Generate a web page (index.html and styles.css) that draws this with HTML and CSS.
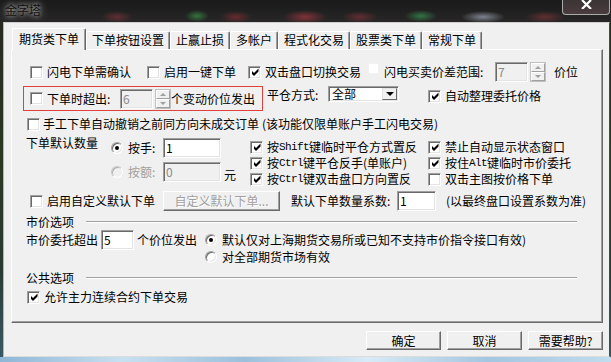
FILE: index.html
```html
<!DOCTYPE html>
<html lang="zh-CN">
<head>
    <meta charset="UTF-8">
    <title>金字塔</title>
    <link rel="stylesheet" href="styles.css">
</head>
<body>
<div class="desktop">
    <div class="titlebar">
        <span class="title">金字塔</span>
        <span class="close-btn">
            <svg width="11" height="9" viewBox="0 0 11 9"><path d="M1 0 L10 9 M10 0 L1 9" stroke="#fff" stroke-width="2.2"/></svg>
        </span>
    </div>

    <div class="window">
        <div class="tabs">
            <span class="tab active">期货类下单</span>
            <span class="tab">下单按钮设置</span>
            <span class="tab">止赢止损</span>
            <span class="tab">多帐户</span>
            <span class="tab">程式化交易</span>
            <span class="tab">股票类下单</span>
            <span class="tab">常规下单</span>
        </div>

        <div class="panel">
            <!-- first line of switches -->
            <div class="row row1">
                <span class="check w117"><i class="cb"></i>闪电下单需确认</span>
                <span class="check w101"><i class="cb"></i>启用一键下单</span>
                <span class="check w120"><i class="cb"><svg width="9" height="9" viewBox="0 0 9 9"><polygon points="1,3 3,5 7.5,0.5 7.5,3.5 3,8 1,6"/></svg></i>双击盘口切换交易</span>
                <span class="check w127 gap3"><i class="cb faint"></i>闪电买卖价差范围:</span>
                <span class="field disabled w33">7</span>
                <span class="spin"><span class="spin-btn"><i class="arr-up"></i></span><span class="spin-btn"><i class="arr-down"></i></span></span>
                <span class="unit">价位</span>
            </div>

            <div class="row row2">
                <div class="redbox">
                    <span class="check w90"><i class="cb"></i>下单时超出:</span>
                    <span class="field disabled w33">6</span>
                    <span class="spin"><span class="spin-btn"><i class="arr-up"></i></span><span class="spin-btn"><i class="arr-down"></i></span></span>
                    <span>个变动价位发出</span>
                </div>
                <span class="pc-label">平仓方式:</span>
                <span class="select">
                    <span class="select-text">全部</span>
                    <span class="select-btn"><i class="arr-black"></i></span>
                </span>
                <span class="check auto-price"><i class="cb"><svg width="9" height="9" viewBox="0 0 9 9"><polygon points="1,3 3,5 7.5,0.5 7.5,3.5 3,8 1,6"/></svg></i>自动整理委托价格</span>
            </div>

            <div class="row row3">
                <span class="check gap3"><i class="cb"></i>手工下单自动撤销之前同方向未成交订单</span>
                <span class="note">(该功能仅限单账户手工闪电交易)</span>
            </div>

            <div class="row row4">
                <span class="qty-label">下单默认数量</span>
                <div class="qty-opts">
                    <div class="qty-line">
                        <span class="radio w52"><i class="rd on"><b></b></i>按手:</span>
                        <span class="field w58">1</span>
                    </div>
                    <div class="qty-line">
                        <span class="radio w52 off"><i class="rd"></i>按额:</span>
                        <span class="field disabled w58">0</span>
                        <span class="unit-yuan">元</span>
                    </div>
                </div>
                <div class="opts-grid">
                    <span class="check"><i class="cb"><svg width="9" height="9" viewBox="0 0 9 9"><polygon points="1,3 3,5 7.5,0.5 7.5,3.5 3,8 1,6"/></svg></i><span>按<span class="mono m5">Shift</span>键临时平仓方式置反</span></span>
                    <span class="check"><i class="cb"><svg width="9" height="9" viewBox="0 0 9 9"><polygon points="1,3 3,5 7.5,0.5 7.5,3.5 3,8 1,6"/></svg></i>禁止自动显示状态窗口</span>
                    <span class="check"><i class="cb"><svg width="9" height="9" viewBox="0 0 9 9"><polygon points="1,3 3,5 7.5,0.5 7.5,3.5 3,8 1,6"/></svg></i><span>按<span class="mono m4">Ctrl</span>键平仓反手(单账户)</span></span>
                    <span class="check"><i class="cb"><svg width="9" height="9" viewBox="0 0 9 9"><polygon points="1,3 3,5 7.5,0.5 7.5,3.5 3,8 1,6"/></svg></i><span>按住<span class="mono m3">Alt</span>键临时市价委托</span></span>
                    <span class="check"><i class="cb"><svg width="9" height="9" viewBox="0 0 9 9"><polygon points="1,3 3,5 7.5,0.5 7.5,3.5 3,8 1,6"/></svg></i><span>按<span class="mono m4">Ctrl</span>键双击盘口方向置反</span></span>
                    <span class="check"><i class="cb"></i>双击主图按价格下单</span>
                </div>
            </div>

            <div class="row row5">
                <span class="check w133"><i class="cb"></i>启用自定义默认下单</span>
                <span class="btn-off">自定义默认下单...</span>
                <span class="factor-label">默认下单数量系数:</span>
                <span class="field w39">1</span>
                <span class="factor-note">(以最终盘口设置系数为准)</span>
            </div>

            <div class="group">
                <span class="group-title">市价选项</span>
                <span class="group-line"></span>
            </div>

            <div class="row row-market">
                <span class="w75">市价委托超出</span>
                <span class="field w33">5</span>
                <span class="market-unit">个价位发出</span>
                <span class="radio"><i class="rd on"><b></b></i>默认仅对上海期货交易所或已知不支持市价指令接口有效)</span>
            </div>
            <div class="row row-radio2">
                <span class="radio"><i class="rd"></i>对全部期货市场有效</span>
            </div>

            <div class="group common">
                <span class="group-title">公共选项</span>
                <span class="group-line"></span>
            </div>

            <div class="row row-last">
                <span class="check"><i class="cb"><svg width="9" height="9" viewBox="0 0 9 9"><polygon points="1,3 3,5 7.5,0.5 7.5,3.5 3,8 1,6"/></svg></i>允许主力连续合约下单交易</span>
            </div>
        </div>

        <div class="footer">
            <span class="btn">确定</span>
            <span class="btn">取消</span>
            <span class="btn">需要帮助?</span>
        </div>
    </div>

    <div class="dock"></div>
</div>
</body>
</html>
```

FILE: styles.css
```css
* {
    box-sizing: border-box;
    margin: 0;
    padding: 0;
}

body {
    width: 611px;
    height: 362px;
    overflow: hidden;
    background: #1d211d;
    font-family: "Noto Sans CJK SC", "Liberation Sans", sans-serif;
    font-size: 12px;
    line-height: 14px;
    color: #000;
    text-autospace: no-autospace;
}

i {
    font-style: normal;
}

.desktop {
    width: 611px;
    height: 362px;
    background: linear-gradient(to bottom, #26271f 0%, #2c3824 45%, #2a3a33 75%, #3a5a68 100%);
}

/* aero title bar */
.titlebar {
    height: 22px;
    display: flex;
    justify-content: space-between;
    align-items: flex-start;
    background:
        radial-gradient(ellipse 16px 6px at 117px 17px, rgba(170, 60, 70, 0.45), transparent),
        radial-gradient(ellipse 12px 6px at 197px 16px, rgba(60, 170, 80, 0.6), transparent),
        radial-gradient(ellipse 16px 6px at 236px 17px, rgba(170, 50, 60, 0.5), transparent),
        radial-gradient(ellipse 22px 7px at 305px 17px, rgba(190, 60, 70, 0.6), transparent),
        radial-gradient(ellipse 18px 6px at 360px 17px, rgba(170, 60, 70, 0.45), transparent),
        radial-gradient(ellipse 16px 6px at 421px 16px, rgba(60, 170, 90, 0.6), transparent),
        radial-gradient(ellipse 22px 6px at 483px 17px, rgba(200, 210, 230, 0.55), transparent),
        radial-gradient(ellipse 20px 6px at 545px 17px, rgba(170, 60, 70, 0.45), transparent),
        linear-gradient(to bottom, #1a1a1a, #282626);
}

.title {
    margin: 3px 0 0 5px;
    color: #111;
    text-shadow: 0 0 4px #bbb, 0 0 8px rgba(255, 255, 255, 0.6);
}

.close-btn {
    width: 48px;
    height: 15px;
    margin-right: 1px;
    border: 1px solid rgba(210, 210, 210, 0.75);
    border-top: 0;
    border-radius: 0 0 4px 4px;
    background: linear-gradient(#3a3434, #4a3c40);
    display: flex;
    justify-content: center;
    align-items: flex-start;
}

/* dialog */
.window {
    width: 607px;
    height: 335px;
    margin-left: 3px;
    background: #f0f0f0;
    border: 1px solid;
    border-color: #cfcfcf #4a4a4a #dcdcdc #b4b4b4;
    padding: 5px 0 0 7px;
}

.tabs {
    display: flex;
    align-items: flex-end;
    height: 21px;
    padding-left: 1px;
}

.tab {
    height: 18px;
    padding: 0 5px;
    border: 1px solid;
    border-bottom: 0;
    border-color: #fff #696969 #fff #fff;
    box-shadow: inset -1px 0 #a0a0a0;
    border-radius: 2px 2px 0 0;
    line-height: 16px;
    white-space: nowrap;
}

.tab.active {
    height: 22px;
    padding: 0 6px;
    margin-bottom: -1px;
    line-height: 20px;
    background: #f0f0f0;
    position: relative;
    z-index: 1;
}

.panel {
    width: 592px;
    height: 274px;
    border: 1px solid;
    border-color: #fff #696969 #696969 #fff;
    box-shadow: inset -1px -1px #a0a0a0;
    padding: 12px 0 0 14px;
}

.row {
    display: flex;
    align-items: center;
    white-space: nowrap;
}

.row1 {
    height: 20px;
    margin-left: 4px;
}

.row2 {
    height: 25px;
    margin-top: 4px;
    align-items: flex-start;
}

.row3 {
    height: 14px;
    margin-top: 6px;
    margin-left: 1px;
}

.row4 {
    margin-top: 5px;
    align-items: flex-start;
}

.row5 {
    height: 20px;
    margin-top: 4px;
    margin-left: 4px;
}

.row-market {
    height: 20px;
    margin-top: 1px;
}

.row-radio2 {
    height: 14px;
    margin-left: 179px;
}

.row-last {
    height: 14px;
    margin-top: 5px;
    margin-left: 1px;
}

/* widths */
.w33 { width: 33px; }
.w39 { width: 39px; }
.w52 { width: 52px; }
.w58 { width: 58px; }
.w75 { width: 75px; }
.w90 { width: 90px; }
.w101 { width: 101px; }
.w117 { width: 117px; }
.w120 { width: 120px; }
.w127 { width: 127px; }
.w133 { width: 133px; }

/* checkbox */
.check {
    display: flex;
    align-items: center;
    gap: 4px;
    flex: none;
    white-space: nowrap;
}

.check.gap3 {
    gap: 3px;
}

.cb {
    width: 13px;
    height: 13px;
    flex: none;
    background: #fff;
    border: 1px solid;
    border-color: #a0a0a0 #fff #fff #a0a0a0;
    box-shadow: inset 1px 1px #696969, inset -1px -1px #e3e3e3;
    display: flex;
    align-items: center;
    justify-content: center;
}

.cb svg {
    margin: 1px 0 0 1px;
}

.cb.faint {
    border-color: #f2f2f2;
    box-shadow: none;
    width: 11px;
    height: 11px;
    margin: 0 2px 7px 0;
}

/* radio */
.radio {
    display: flex;
    align-items: center;
    gap: 5px;
    flex: none;
}

.radio.off {
    color: #a0a0a0;
}

.rd {
    width: 12px;
    height: 12px;
    flex: none;
    border-radius: 50%;
    background: #fff;
    border: 1px solid;
    border-color: #a0a0a0 #fff #fff #a0a0a0;
    box-shadow: inset 1px 1px #696969, inset -1px -1px #e3e3e3;
    display: flex;
    align-items: center;
    justify-content: center;
}

.radio.off .rd {
    background: #f0f0f0;
    border-color: #c8c8c8 #fff #fff #c8c8c8;
    box-shadow: inset 1px 1px #b0b0b0;
}

.rd b {
    width: 4px;
    height: 4px;
    border-radius: 50%;
    background: #000;
}

/* edit box */
.field {
    height: 20px;
    flex: none;
    background: #fff;
    border: 1px solid;
    border-color: #a0a0a0 #fff #fff #a0a0a0;
    box-shadow: inset 1px 1px #696969, inset -1px -1px #e3e3e3;
    padding: 0 2px;
    line-height: 18px;
}

.field.disabled {
    background: #f0f0f0;
    color: #8a8a8a;
}

.spin {
    width: 16px;
    height: 20px;
    margin-left: 2px;
    flex: none;
    display: flex;
    flex-direction: column;
    border: 1px solid #c0c0c0;
}

.spin-btn {
    flex: 1;
    background: #f0f0f0;
    border: 1px solid;
    border-color: #fff #a0a0a0 #a0a0a0 #fff;
    display: flex;
    align-items: center;
    justify-content: center;
}

.arr-up {
    border-left: 3px solid transparent;
    border-right: 3px solid transparent;
    border-bottom: 3px solid #a0a0a0;
}

.arr-down {
    border-left: 3px solid transparent;
    border-right: 3px solid transparent;
    border-top: 3px solid #a0a0a0;
}

.unit {
    margin-left: 8px;
}

.redbox {
    width: 240px;
    height: 25px;
    margin-left: -3px;
    border: 1px solid #e2403f;
    display: flex;
    align-items: center;
    padding-left: 6px;
}

.pc-label {
    width: 61px;
    margin: 2px 0 0 4px;
}

.select {
    width: 71px;
    height: 16px;
    display: flex;
    background: #fff;
    border: 1px solid;
    border-color: #a0a0a0 #fff #fff #a0a0a0;
    box-shadow: inset 1px 1px #696969, inset -1px -1px #e3e3e3;
    padding: 1px;
}

.select-text {
    flex: 1;
    padding-left: 2px;
    line-height: 12px;
}

.select-btn {
    width: 15px;
    background: #f0f0f0;
    border: 1px solid;
    border-color: #e3e3e3 #696969 #696969 #e3e3e3;
    display: flex;
    align-items: center;
    justify-content: center;
}

.arr-black {
    border-left: 4px solid transparent;
    border-right: 4px solid transparent;
    border-top: 4px solid #000;
}

.auto-price {
    margin: 3px 0 0 29px;
}

.note {
    margin-left: 3px;
}

.qty-label {
    width: 85px;
}

.qty-opts {
    width: 139px;
    margin-top: 2px;
    display: flex;
    flex-direction: column;
    gap: 4px;
}

.qty-line {
    display: flex;
    align-items: center;
    height: 20px;
}

.unit-yuan {
    margin: 6px 0 0 3px;
}

.opts-grid {
    margin-top: 3px;
    display: grid;
    grid-template-columns: 178px auto;
    grid-auto-rows: 16px;
    align-items: center;
}

/* latin words drawn half-width, as in the old bitmap font */
.mono {
    display: inline-block;
    font-family: "Liberation Mono", monospace;
    font-size: 11px;
    letter-spacing: -0.6px;
    overflow: visible;
    vertical-align: top;
}

.m3 { width: 18px; }
.m4 { width: 24px; }
.m5 { width: 30px; }

.btn-off {
    width: 117px;
    height: 20px;
    flex: none;
    text-align: center;
    line-height: 18px;
    color: #a0a0a0;
    text-shadow: 1px 1px #fff;
    border: 1px solid;
    border-color: #fff #696969 #696969 #fff;
    box-shadow: inset -1px -1px #a0a0a0;
}

.factor-label {
    width: 106px;
    margin-left: 11px;
}

.factor-note {
    margin-left: 10px;
}

/* section titles */
.group {
    display: flex;
    align-items: center;
    height: 14px;
    margin-top: 4px;
}

.group.common {
    margin-top: 7px;
}

.group-title {
    width: 60px;
}

.group-line {
    width: 491px;
    height: 2px;
    border-top: 1px solid #a0a0a0;
    border-bottom: 1px solid #fff;
}

.market-unit {
    width: 68px;
    margin-left: 3px;
}

/* dialog buttons */
.footer {
    width: 592px;
    margin-top: 8px;
    display: flex;
    justify-content: flex-end;
    gap: 6px;
}

.btn {
    width: 75px;
    height: 19px;
    text-align: center;
    line-height: 17px;
    background: #f0f0f0;
    border: 1px solid;
    border-color: #fff #696969 #696969 #fff;
    box-shadow: inset -1px -1px #a0a0a0;
}

.dock {
    height: 5px;
    background: linear-gradient(90deg, #8fb6d6, #c8e0f0 20%, #9cc0dc 40%, #d8eaf6 60%, #a4c6e0 80%, #c0dcee);
}
```
